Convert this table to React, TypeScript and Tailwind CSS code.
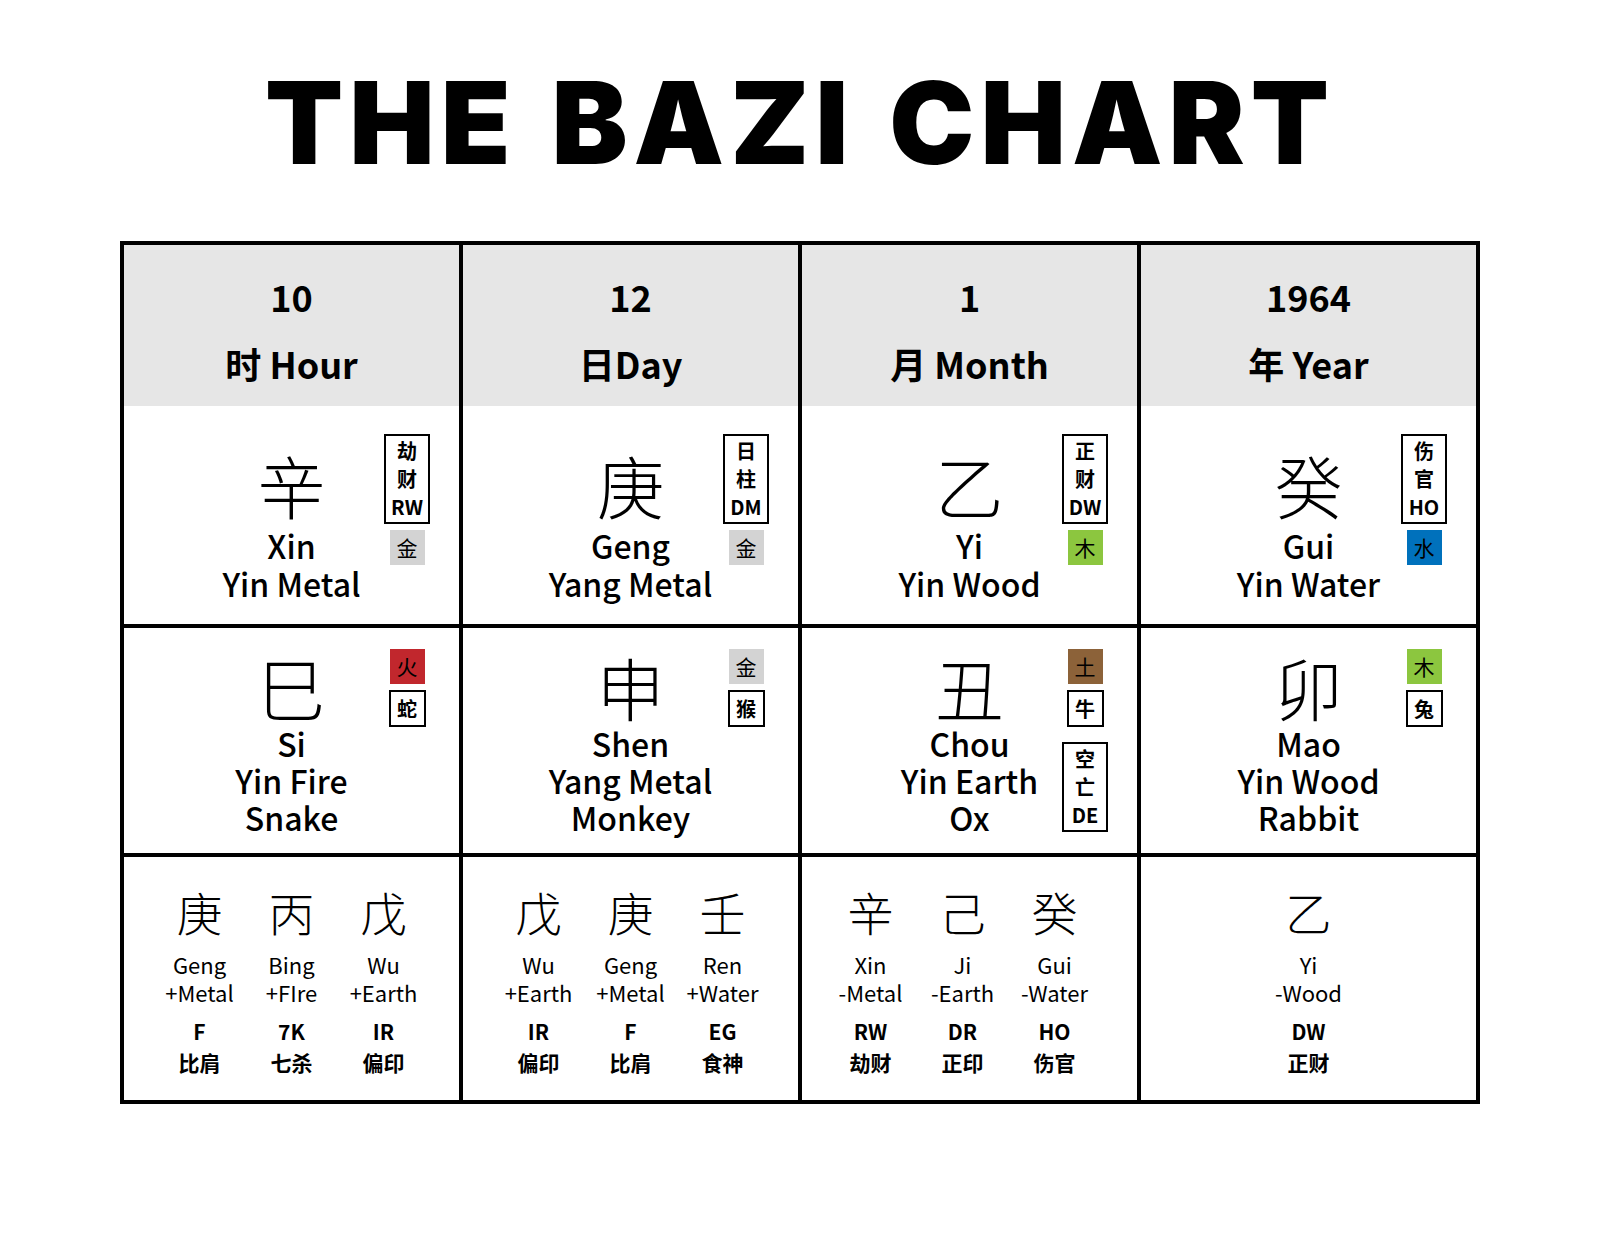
import React from "react";

const cjk = "font-['Noto_Sans_CJK_SC','Noto_Sans',sans-serif]";

interface Tag {
  kind: "box" | "el";
  lines?: string[];
  text?: string;
  bg?: string;
}

interface Pillar {
  num: string;
  label: string;
  stem: { ch: string; py: string; desc: string; tags: Tag[] };
  branch: { ch: string; py: string; desc: string; animal: string; tags: Tag[] };
  hidden: { ch: string; py: string; el: string; code: string; cn: string }[];
}

const pillars: Pillar[] = [
  {
    num: "10",
    label: "时 Hour",
    stem: {
      ch: "辛",
      py: "Xin",
      desc: "Yin Metal",
      tags: [
        { kind: "box", lines: ["劫", "财", "RW"] },
        { kind: "el", text: "金", bg: "bg-[#d3d3d3]" },
      ],
    },
    branch: {
      ch: "巳",
      py: "Si",
      desc: "Yin Fire",
      animal: "Snake",
      tags: [
        { kind: "el", text: "火", bg: "bg-[#c1272d]" },
        { kind: "box", lines: ["蛇"] },
      ],
    },
    hidden: [
      { ch: "庚", py: "Geng", el: "+Metal", code: "F", cn: "比肩" },
      { ch: "丙", py: "Bing", el: "+FIre", code: "7K", cn: "七杀" },
      { ch: "戊", py: "Wu", el: "+Earth", code: "IR", cn: "偏印" },
    ],
  },
  {
    num: "12",
    label: "日Day",
    stem: {
      ch: "庚",
      py: "Geng",
      desc: "Yang Metal",
      tags: [
        { kind: "box", lines: ["日", "柱", "DM"] },
        { kind: "el", text: "金", bg: "bg-[#d3d3d3]" },
      ],
    },
    branch: {
      ch: "申",
      py: "Shen",
      desc: "Yang Metal",
      animal: "Monkey",
      tags: [
        { kind: "el", text: "金", bg: "bg-[#d3d3d3]" },
        { kind: "box", lines: ["猴"] },
      ],
    },
    hidden: [
      { ch: "戊", py: "Wu", el: "+Earth", code: "IR", cn: "偏印" },
      { ch: "庚", py: "Geng", el: "+Metal", code: "F", cn: "比肩" },
      { ch: "壬", py: "Ren", el: "+Water", code: "EG", cn: "食神" },
    ],
  },
  {
    num: "1",
    label: "月 Month",
    stem: {
      ch: "乙",
      py: "Yi",
      desc: "Yin Wood",
      tags: [
        { kind: "box", lines: ["正", "财", "DW"] },
        { kind: "el", text: "木", bg: "bg-[#8cc63f]" },
      ],
    },
    branch: {
      ch: "丑",
      py: "Chou",
      desc: "Yin Earth",
      animal: "Ox",
      tags: [
        { kind: "el", text: "土", bg: "bg-[#8c6239]" },
        { kind: "box", lines: ["牛"] },
        { kind: "box", lines: ["空", "亡", "DE"] },
      ],
    },
    hidden: [
      { ch: "辛", py: "Xin", el: "-Metal", code: "RW", cn: "劫财" },
      { ch: "己", py: "Ji", el: "-Earth", code: "DR", cn: "正印" },
      { ch: "癸", py: "Gui", el: "-Water", code: "HO", cn: "伤官" },
    ],
  },
  {
    num: "1964",
    label: "年 Year",
    stem: {
      ch: "癸",
      py: "Gui",
      desc: "Yin Water",
      tags: [
        { kind: "box", lines: ["伤", "官", "HO"] },
        { kind: "el", text: "水", bg: "bg-[#0071bc]" },
      ],
    },
    branch: {
      ch: "卯",
      py: "Mao",
      desc: "Yin Wood",
      animal: "Rabbit",
      tags: [
        { kind: "el", text: "木", bg: "bg-[#8cc63f]" },
        { kind: "box", lines: ["兔"] },
      ],
    },
    hidden: [{ ch: "乙", py: "Yi", el: "-Wood", code: "DW", cn: "正财" }],
  },
];

const TagStack = ({ tags, top }: { tags: Tag[]; top: string }) => (
  <div className={`absolute right-[29px] w-[46px] flex flex-col items-center gap-[6px] ${top}`}>
    {tags.map((t, i) =>
      t.kind === "el" ? (
        <div
          key={i}
          className={`w-[35px] h-[35px] flex items-center justify-center text-[21px] leading-none text-black ${t.bg}`}
        >
          {t.text}
        </div>
      ) : (
        <div
          key={i}
          className={`border-2 border-black bg-white flex flex-col items-center justify-center font-bold text-[20px] leading-[28px] ${
            t.lines && t.lines.length > 1 ? "w-[46px] py-[1px]" : "w-[37px] h-[37px]"
          } ${i === 2 ? "mt-[9px]" : ""}`}
        >
          {t.lines?.map((l) => (
            <span key={l}>{l}</span>
          ))}
        </div>
      )
    )}
  </div>
);

export default function App() {
  return (
    <div className={`w-[1600px] min-h-[1236px] bg-white text-black ${cjk}`}>
      <h1 className="pt-[66px] text-center font-['Inter','Liberation_Sans',sans-serif] font-black text-[114px] leading-none tracking-[6px] [word-spacing:6px]">
        THE BAZI CHART
      </h1>

      <div className="mt-[61px] mx-auto w-[1360px] bg-black p-[4px] grid grid-cols-4 gap-[4px]">
        {pillars.map((p) => (
          <div key={p.label} className="bg-white flex flex-col">
            <div className="h-[161px] bg-[#e6e6e6] flex flex-col items-center pt-[18px] font-bold text-[36px] leading-[67px]">
              <div>{p.num}</div>
              <div>{p.label}</div>
            </div>
            <div className="relative h-[218px] flex flex-col items-center pt-[45px]">
              <div className="text-[68px] leading-[68px] font-light">{p.stem.ch}</div>
              <div className="text-[32px] leading-[38px] font-medium mt-[7px]">{p.stem.py}</div>
              <div className="text-[32px] leading-[38px] font-medium">{p.stem.desc}</div>
              <TagStack tags={p.stem.tags} top="top-[28px]" />
            </div>
          </div>
        ))}
        {pillars.map((p) => (
          <div key={p.label + "b"} className="relative bg-white h-[225px] flex flex-col items-center pt-[25px]">
            <div className="text-[68px] leading-[68px] font-light">{p.branch.ch}</div>
            <div className="text-[32px] leading-[37px] font-medium mt-[4px]">{p.branch.py}</div>
            <div className="text-[32px] leading-[37px] font-medium">{p.branch.desc}</div>
            <div className="text-[32px] leading-[37px] font-medium">{p.branch.animal}</div>
            <TagStack tags={p.branch.tags} top="top-[21px]" />
          </div>
        ))}
        {pillars.map((p, ci) => (
          <div
            key={p.label + "h"}
            className={`bg-white h-[243px] flex justify-center pt-[31px] ${ci === 2 ? "pr-[14px]" : ""}`}
          >
            {p.hidden.map((h, i) => (
              <div key={i} className="w-[92px] flex flex-col items-center">
                <div className="text-[46px] leading-[46px] font-light">{h.ch}</div>
                <div className="mt-[16px] text-[22px] leading-[28px]">{h.py}</div>
                <div className="text-[22px] leading-[28px]">{h.el}</div>
                <div className="mt-[10px] text-[21px] leading-[31px] font-bold">{h.code}</div>
                <div className="text-[21px] leading-[31px] font-bold">{h.cn}</div>
              </div>
            ))}
          </div>
        ))}
      </div>
    </div>
  );
}
